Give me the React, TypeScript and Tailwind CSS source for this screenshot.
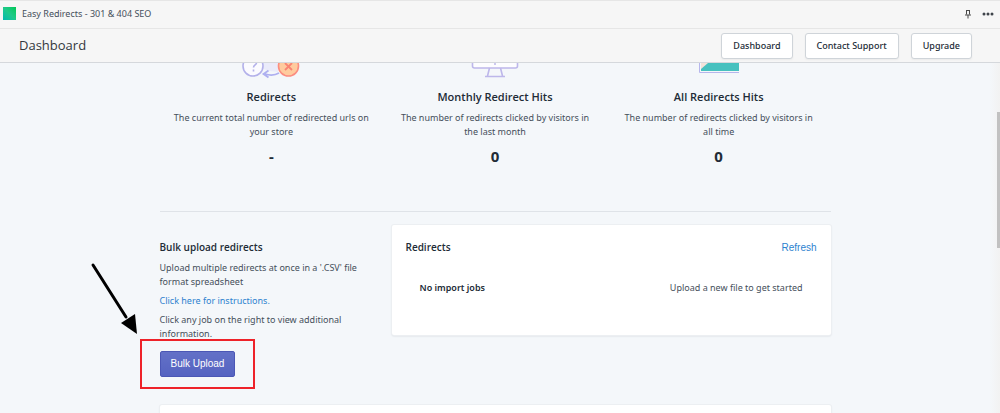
import React from "react";

const stats = [
  { title: "Redirects", text: "The current total number of redirected urls on your store", value: "-", Icon: RedirectsIcon },
  { title: "Monthly Redirect Hits", text: "The number of redirects clicked by visitors in the last month", value: "0", Icon: MonitorIcon },
  { title: "All Redirects Hits", text: "The number of redirects clicked by visitors in all time", value: "0", Icon: ChartIcon },
];

const actions = ["Dashboard", "Contact Support", "Upgrade"];

function RedirectsIcon() {
  return (
    <svg width="60" height="16" viewBox="0 0 60 16" fill="none" aria-hidden="true">
      <path d="M22 0h15v9q-8 0-15-3z" fill="#eaebfa" />
      <circle cx="12" cy="3" r="10" fill="#fbfbff" stroke="#b3b1ea" strokeWidth="1.6" />
      <path d="M9.5 0q0-3 3-3t3 3c0 2-3 2-3 4.500M12.500 6.500v2" stroke="#b3b1ea" strokeWidth="1.600" />
      <circle cx="47.500" cy="3" r="10" fill="#ffcb9e" stroke="#fb8d80" strokeWidth="1.600" />
      <path d="M44 0l7 7M51 0l-7 7" stroke="#f98473" strokeWidth="1.800" />
      <path d="M38 10q-6 3.500-14 1M27.500 7.500l-5 3.500 5 3.500" stroke="#aeb0f0" strokeWidth="1.800" />
    </svg>
  );
}

function MonitorIcon() {
  return (
    <svg width="48" height="16" viewBox="0 0 48 16" fill="none" aria-hidden="true">
      <path d="M1.500-6V3q0 2 2 2h41q2 0 2-2V-6" fill="#fdfdff" stroke="#bdb7ea" strokeWidth="1.600" />
      <path d="M18.500 5l-2 8M29.500 5l2 8M14 13.500h20" stroke="#bdb7ea" strokeWidth="1.600" />
      <circle cx="24" cy="1" r="1" fill="#bdb7ea" />
    </svg>
  );
}

function ChartIcon() {
  return (
    <svg width="40" height="16" viewBox="0 0 40 16" fill="none" aria-hidden="true">
      <path d="M.5 0v9.500H40" stroke="#b6b6ec" />
      <path d="M2 0h8L2 8z" fill="#f3e3da" />
      <path d="M9 0h31v8H2V6z" fill="#47c1bf" />
    </svg>
  );
}

function PinIcon() {
  return (
    <svg width="8" height="10" viewBox="0 0 8 10" fill="none" stroke="#4a4a4a" aria-hidden="true">
      <path d="M2 1.500h4M2.500 1v4.500M5.500 1v4.500M1 6h6M4 6v3.500" />
    </svg>
  );
}

function DotsIcon() {
  return (
    <svg width="12" height="4" viewBox="0 0 12 4" fill="#3f444a" aria-hidden="true">
      <circle cx="2" cy="2" r="1.500" />
      <circle cx="6" cy="2" r="1.500" />
      <circle cx="10" cy="2" r="1.500" />
    </svg>
  );
}

export default function App() {
  return (
    <div className="flex h-screen flex-col overflow-hidden bg-[#f4f7fa] font-['Noto_Sans','Open_Sans',sans-serif] text-[#212b36]">
      {/* App bar */}
      <div className="flex h-[29px] shrink-0 items-center gap-1.5 border-y border-[#e6e6e6] bg-[#f6f6f6] pr-1.5 pb-0.5 pl-[3px] text-[9px] text-[#454f5b]">
        <span className="size-[13px] bg-linear-to-tr from-[#00b8b0] via-[#1ec98a] to-[#00c853]" />
        <span>Easy Redirects - 301 &amp; 404 SEO</span>
        <button aria-label="Pin" className="mr-1 ml-auto">
          <PinIcon />
        </button>
        <button aria-label="More actions">
          <DotsIcon />
        </button>
      </div>

      {/* Page header */}
      <header className="flex h-[34px] shrink-0 items-center gap-3 border-b border-[#d5d8dc] bg-[#f6f6f6] pr-7 pl-[19px]">
        <h1 className="mr-auto font-['Open_Sans',sans-serif] text-[13px] text-[#33383d]">Dashboard</h1>
        {actions.map((label) => (
          <button
            key={label}
            className="h-[26px] rounded-[3px] border border-[#cfd4d9] bg-white px-[11px] text-[9px] font-medium shadow-xs"
          >
            {label}
          </button>
        ))}
      </header>

      <div className="flex min-h-0 flex-1">
        <main className="min-w-0 flex-1 overflow-hidden">
          <div className="mx-auto max-w-[671px]">
            <section className="grid grid-cols-3 border-b border-[#dfe3e8] pb-[45px] text-center">
              {stats.map(({ title, text, value, Icon }) => (
                <div key={title} className="flex flex-col items-center px-3">
                  <Icon />
                  <h2 className="mt-2.5 font-['Open_Sans',sans-serif] text-[11px] leading-4 font-semibold">{title}</h2>
                  <p className="mt-1.5 text-[9px] leading-[14px] text-[#454f5b]">{text}</p>
                  <p className="mt-[7px] text-[15px] leading-5 font-bold">{value}</p>
                </div>
              ))}
            </section>

            <section className="flex items-start pt-[13px]">
              <div className="w-[232px] shrink-0 pt-3.5 pr-5 text-[9px] leading-[14px] text-[#454f5b]">
                <h2 className="font-['Open_Sans',sans-serif] text-[10px] leading-4 font-semibold text-[#212b36]">Bulk upload redirects</h2>
                <p className="mt-1.5">Upload multiple redirects at once in a '.CSV' file format spreadsheet</p>
                <p className="mt-[5px]">
                  <a href="#instructions" className="text-[#2c82cf]">Click here for instructions.</a>
                </p>
                <p className="mt-[5px]">Click any job on the right to view additional information.</p>
                <div className="relative mt-2.5 w-fit">
                  <button className="h-[26px] rounded-xs border border-[#4b57b5] bg-linear-to-b from-[#6371c7] to-[#5563c1] px-2.5 font-['Liberation_Sans',Arial,sans-serif] text-[10px] text-white">
                    Bulk Upload
                  </button>
                  {/* Callout box and arrow */}
                  <div className="pointer-events-none absolute -inset-x-5 -inset-y-3 border-2 border-[#ee2229]" />
                  <svg className="pointer-events-none absolute right-full bottom-full" width="70" height="90" viewBox="0 0 70 90" aria-hidden="true">
                    <path d="M3 4L36 56" stroke="#000" strokeWidth="3" strokeLinecap="round" />
                    <path d="M47 73L31 62L45 53z" />
                  </svg>
                </div>
              </div>

              <div className="h-[110px] flex-1 rounded-xs bg-white px-3.5 pt-3.5 shadow-[0_0_0_1px_#eceff2,0_1px_2px_#c9ced4]">
                <div className="flex h-4 items-center justify-between">
                  <h2 className="font-['Open_Sans',sans-serif] text-[10px] font-semibold">Redirects</h2>
                  <button className="font-['Liberation_Sans',Arial,sans-serif] text-[10px] text-[#2c82cf]">Refresh</button>
                </div>
                <div className="mt-[26px] flex items-center justify-between px-3.5 text-[9px] leading-[14px]">
                  <span className="font-semibold">No import jobs</span>
                  <span className="text-[#454f5b]">Upload a new file to get started</span>
                </div>
              </div>
            </section>

            <section className="mt-7 h-20 rounded-xs bg-white shadow-[0_0_0_1px_#eceff2,0_1px_2px_#c9ced4]" />
          </div>
        </main>

        {/* Scroll track */}
        <div className="flex w-2.5 shrink-0 justify-end bg-linear-to-r from-[#f4f7fa] to-[#f2f2f2] pt-[49px]">
          <div className="h-[136px] w-[3px] bg-[#c1c1c1]" />
        </div>
      </div>
    </div>
  );
}
